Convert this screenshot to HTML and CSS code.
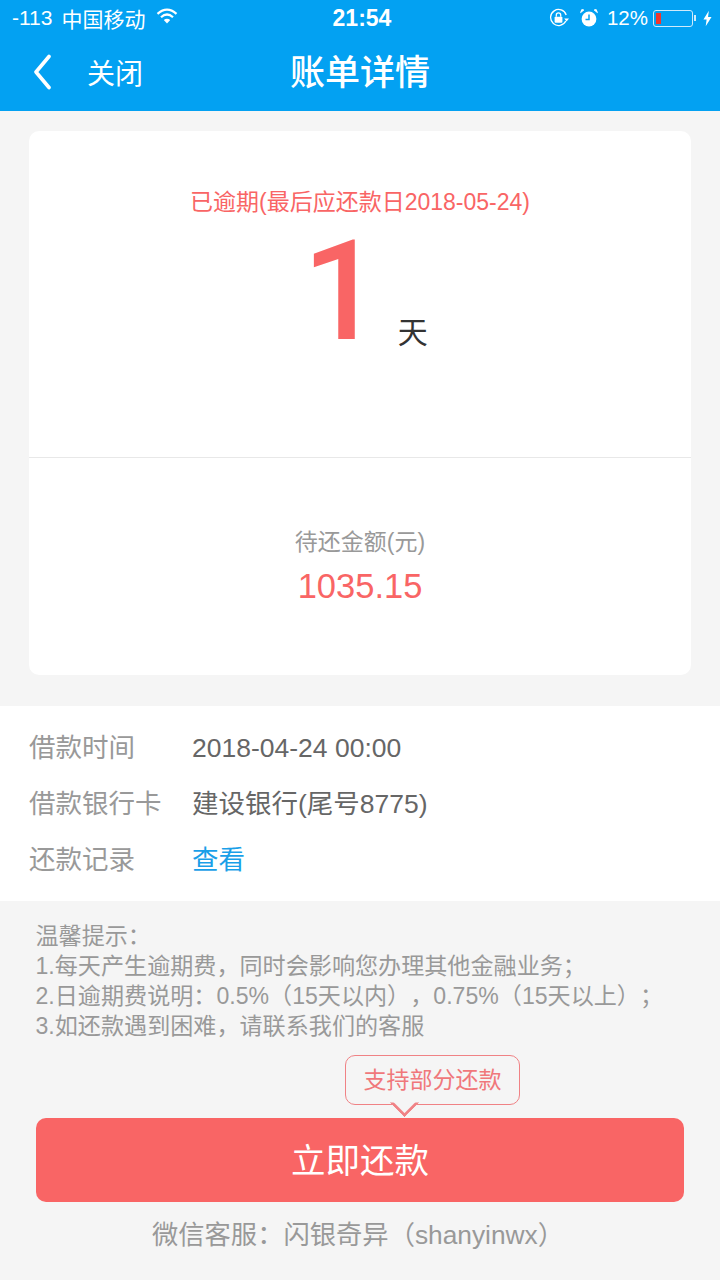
FILE: index.html
```html
<!DOCTYPE html>
<html lang="zh-CN">
<head>
  <meta charset="UTF-8">
  <meta name="viewport" content="width=device-width, initial-scale=1.0">
  <title>账单详情</title>
  <link rel="stylesheet" href="styles.css">
</head>
<body>

  <header class="top">
    <div class="status">
      <div class="status-left">
        <span>-113</span>
        <span class="carrier">中国移动</span>
        <svg class="wifi" width="22" height="16" viewBox="0 0 22 16">
          <path d="M1.5 5.8 Q11 -2.4 20.5 5.8" fill="none" stroke="#fff" stroke-width="2.2"/>
          <path d="M5 9.2 Q11 3.8 17 9.2" fill="none" stroke="#fff" stroke-width="2.2"/>
          <path d="M7.8 12 Q11 9.4 14.2 12 L11 15.6 Z" fill="#fff"/>
        </svg>
      </div>
      <div class="status-time">21:54</div>
      <div class="status-right">
        <svg class="lock" width="20" height="20" viewBox="0 0 20 20">
          <path d="M16.8 13 A8 8 0 1 1 17.2 7" fill="none" stroke="#fff" stroke-width="1.3"/>
          <path d="M15.2 10.4 L20 10.4 L17.6 13.4 Z" fill="#fff"/>
          <rect x="5.6" y="8.8" width="7.8" height="6" rx="0.8" fill="#fff"/>
          <path d="M7.3 8.8 V7 a2.2 2.2 0 0 1 4.4 0 V8.8" fill="none" stroke="#fff" stroke-width="1.3"/>
        </svg>
        <svg class="alarm" width="20" height="20" viewBox="0 0 20 20">
          <circle cx="10" cy="11" r="7.4" fill="#fff"/>
          <path d="M10 6.5 V11.5 H6.5" fill="none" stroke="#03a1f2" stroke-width="1.5"/>
          <path d="M1.6 4.6 L4.8 2 L2.8 1.6 Z M18.4 4.6 L15.2 2 L17.2 1.6 Z" fill="#fff" stroke="#fff"/>
        </svg>
        <span class="percent">12%</span>
        <div class="battery"><div class="battery-level"></div></div>
        <div class="battery-tip"></div>
        <svg class="bolt" width="9" height="17" viewBox="0 0 10 17">
          <path d="M6.5 0 L0.5 9.5 H4 L3 17 L9.5 6.8 H5.6 Z" fill="#fff"/>
        </svg>
      </div>
    </div>
    <div class="nav">
      <div class="nav-left">
        <svg class="back" width="20" height="36" viewBox="0 0 20 36">
          <path d="M17 2.5 L4 18 L17 33.5" fill="none" stroke="#fff" stroke-width="3.6" stroke-linecap="round" stroke-linejoin="round"/>
        </svg>
        <span class="close">关闭</span>
      </div>
      <div class="nav-title">账单详情</div>
    </div>
  </header>

  <section class="card">
    <div class="overdue">
      <p class="overdue-note">已逾期(最后应还款日2018-05-24)</p>
      <div class="overdue-days">
        <span class="days-num">1</span>
        <span class="days-unit">天</span>
      </div>
    </div>
    <div class="amount">
      <p class="amount-label">待还金额(元)</p>
      <p class="amount-num">1035.15</p>
    </div>
  </section>

  <section class="info">
    <div class="info-row"><span class="info-key">借款时间</span><span class="info-val">2018-04-24 00:00</span></div>
    <div class="info-row"><span class="info-key">借款银行卡</span><span class="info-val">建设银行(尾号8775)</span></div>
    <div class="info-row"><span class="info-key">还款记录</span><span class="info-link">查看</span></div>
  </section>

  <section class="tips">
    <p>温馨提示：</p>
    <p>1.每天产生逾期费，同时会影响您办理其他金融业务；</p>
    <p>2.日逾期费说明：0.5%（15天以内），0.75%（15天以上）；</p>
    <p>3.如还款遇到困难，请联系我们的客服</p>
  </section>

  <div class="pay">
    <div class="bubble">支持部分还款</div>
    <button class="pay-btn">立即还款</button>
  </div>
  <p class="service">微信客服：闪银奇异（shanyinwx）</p>

</body>
</html>
```

FILE: styles.css
```css
* {
  box-sizing: border-box;
}
html, body {
  margin: 0;
  padding: 0;
}
body {
  width: 720px;
  height: 1280px;
  overflow: hidden;
  background-color: #f5f5f5;
  font-family: "Liberation Sans", "Noto Sans CJK SC", sans-serif;
  color: #666;
  text-spacing-trim: space-all;
}
p {
  margin: 0;
}

/* top bar */
.top {
  height: 111px;
  background-color: #03a1f2;
  color: #fff;
}
.status {
  height: 38px;
  display: grid;
  grid-template-columns: 1fr auto 1fr;
  align-items: center;
  padding: 0 8px 2px 12px;
  font-size: 21px;
}
.status-left {
  display: flex;
  align-items: center;
}
.carrier {
  margin-left: 9px;
}
.wifi {
  margin-left: 11px;
  margin-top: -4px;
}
.status-time {
  font-size: 23px;
  font-weight: bold;
}
.status-right {
  display: flex;
  align-items: center;
  justify-content: flex-end;
}
.alarm {
  margin-left: 10px;
}
.percent {
  margin-left: 8px;
  font-size: 20.5px;
}
.battery {
  width: 40px;
  height: 17px;
  margin-left: 5px;
  padding: 2px;
  border: 1px solid #cfeafb;
  border-radius: 3px;
}
.battery-level {
  width: 5px;
  height: 100%;
  background-color: #f0352e;
}
.battery-tip {
  width: 2px;
  height: 6px;
  margin-left: 1px;
  background-color: #cfeafb;
}
.bolt {
  margin-left: 7px;
}

.nav {
  height: 73px;
  display: grid;
  grid-template-columns: 1fr auto 1fr;
  align-items: center;
  padding: 0 32px 6px;
}
.nav-left {
  display: flex;
  align-items: center;
}
.close {
  margin-left: 35px;
  font-size: 28px;
}
.nav-title {
  margin-bottom: 4px;
  font-size: 35px;
  font-weight: 500;
}

/* overdue card */
.card {
  width: 662px;
  height: 544px;
  margin: 20px auto 0;
  background-color: #fff;
  border-radius: 10px;
}
.overdue {
  height: 327px;
  padding-top: 56px;
  border-bottom: 1px solid #e8e8e8;
  text-align: center;
}
.overdue-note {
  font-size: 23px;
  line-height: 30px;
  color: #f96565;
}
.overdue-days {
  display: flex;
  justify-content: center;
  align-items: flex-end;
  height: 134px;
  padding-left: 10px;
}
.days-num {
  font-family: Roboto, sans-serif;
  font-size: 140px;
  font-weight: 500;
  line-height: 120px;
  color: #f96565;
}
.days-unit {
  margin-left: 16px;
  font-size: 30px;
  line-height: 36px;
  color: #333;
}
.amount {
  padding-top: 67px;
  text-align: center;
}
.amount-label {
  font-size: 23px;
  line-height: 34px;
  color: #999;
}
.amount-num {
  margin-top: 4px;
  font-size: 34.5px;
  line-height: 46px;
  color: #f96565;
}

/* loan info */
.info {
  height: 195px;
  margin-top: 31px;
  padding: 14px 0 0 29px;
  background-color: #fff;
}
.info-row {
  display: flex;
  align-items: center;
  height: 56px;
  font-size: 26.5px;
  line-height: 30px;
}
.info-key {
  width: 163px;
  color: #999;
}
.info-link {
  color: #1a9fe8;
}

/* tips */
.tips {
  padding: 20px 0 0 35.5px;
  font-size: 23.1px;
  line-height: 30px;
  color: #999;
}

/* pay button */
.pay {
  display: flex;
  flex-direction: column;
  margin: 14px 36px 0;
}
.bubble {
  position: relative;
  align-self: flex-start;
  width: 175px;
  height: 50px;
  margin-left: 309px;
  border: 1px solid #f08285;
  border-radius: 10px;
  font-size: 23px;
  line-height: 48px;
  text-align: center;
  color: #f0787b;
}
/* notch: only the lower half of the turned square shows */
.bubble::after {
  content: "";
  position: absolute;
  left: 48px;
  bottom: -9px;
  width: 18px;
  height: 18px;
  border-right: 3px solid #f08285;
  border-bottom: 3px solid #f08285;
  background-color: #f5f5f5;
  clip-path: polygon(100% 0, 100% 100%, 0 100%);
  transform: rotate(45deg);
}
.pay-btn {
  display: block;
  width: 100%;
  height: 84px;
  margin-top: 13px;
  padding: 0 0 4px;
  border: none;
  border-radius: 10px;
  background-color: #f96565;
  color: #fff;
  font-family: inherit;
  font-size: 34.5px;
}
.service {
  margin-top: 15px;
  padding-right: 4px;
  font-size: 26.3px;
  line-height: 36px;
  text-align: center;
  color: #999;
}
```
